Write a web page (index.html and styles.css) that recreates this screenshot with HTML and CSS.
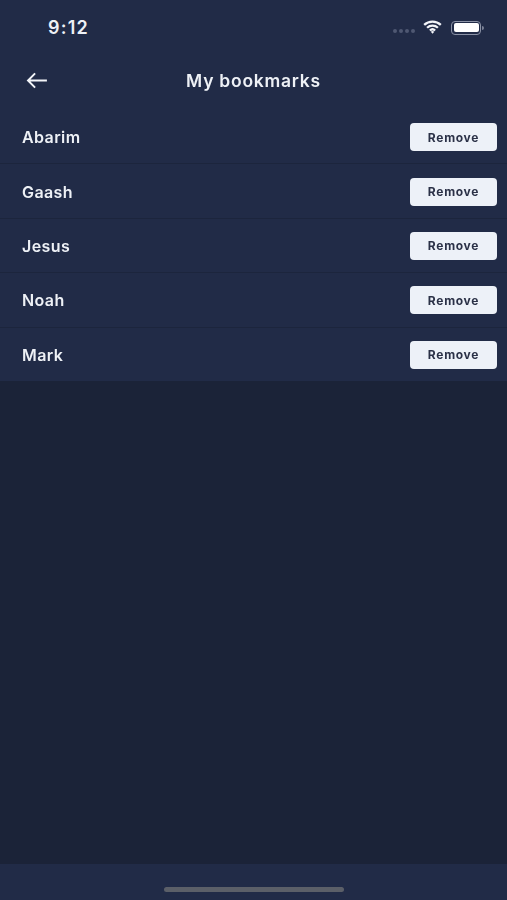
FILE: index.html
```html
<!DOCTYPE html>
<html lang="en">
<head>
<meta charset="utf-8">
<title>My bookmarks</title>
<link rel="stylesheet" href="styles.css">
</head>
<body>
<div class="app">
  <header class="top">
    <div class="status">
      <span class="time">9:12</span>
      <div class="status-icons">
        <span class="signal"><i></i><i></i><i></i><i></i></span>
        <svg class="wifi" width="21" height="14" viewBox="0 0 22 16"><path d="M1.5 5.6a13.6 13.6 0 0 1 19 0M4.8 8.9a9 9 0 0 1 12.4 0M8 12a4.4 4.4 0 0 1 6 0" fill="none" stroke="#f3f5f9" stroke-width="2.6"/><path d="M11 15.8l-2-2.4a3 3 0 0 1 4 0z" fill="#f3f5f9"/></svg>
        <span class="battery"><span class="level"></span></span>
        <span class="cap"></span>
      </div>
    </div>
    <nav class="nav">
      <svg class="back" width="24" height="17" viewBox="0 0 24 18"><path d="M22.5 9H2.5M10 1.5 2.5 9l7.5 7.5" fill="none" stroke="#f3f5f9" stroke-width="2.1"/></svg>
      <h1 class="title">My bookmarks</h1>
    </nav>
  </header>
  <ul class="list">
    <li class="row"><span class="name">Abarim</span><button class="remove">Remove</button></li>
    <li class="row"><span class="name">Gaash</span><button class="remove">Remove</button></li>
    <li class="row"><span class="name">Jesus</span><button class="remove">Remove</button></li>
    <li class="row"><span class="name">Noah</span><button class="remove">Remove</button></li>
    <li class="row"><span class="name">Mark</span><button class="remove">Remove</button></li>
  </ul>
  <div class="spacer"></div>
  <footer class="bottom"><span class="home"></span></footer>
</div>
</body>
</html>
```

FILE: styles.css
```css
* { box-sizing: border-box; margin: 0; padding: 0; }
html, body { height: 100%; }
body { background: #1b2338; font-family: Inter, "Liberation Sans", sans-serif; color: #eef1f6; overflow: hidden; }
.app { height: 900px; display: flex; flex-direction: column; filter: blur(0.35px); }
.top { background: #212b47; height: 110px; display: flex; flex-direction: column; }
.status { height: 55px; display: flex; justify-content: space-between; align-items: center; padding: 0 23px 0 48px; }
.time { font-size: 18px; font-weight: 600; letter-spacing: 1.2px; }
.status-icons { display: flex; align-items: center; }
.signal { display: flex; gap: 2px; margin: 6px 7px 0 0; }
.signal i { width: 4px; height: 4px; border-radius: 50%; background: #4f5872; }
.wifi { margin-bottom: 1px; }
.battery { width: 30px; height: 14px; margin-left: 8px; border: 1.5px solid #8b92a6; border-radius: 4px; padding: 1.5px; display: flex; }
.level { flex: 1; background: #fff; border-radius: 2px; }
.cap { width: 2px; height: 4px; margin-left: 1px; background: #7b8297; border-radius: 0 2px 2px 0; }
.nav { flex: 1; position: relative; display: flex; align-items: center; justify-content: center; }
.back { position: absolute; left: 25px; top: 17px; }
.title { font-size: 17.5px; font-weight: 600; letter-spacing: 0.75px; margin-bottom: 5px; }
.list { list-style: none; background: #212b47; }
.row { height: 54.4px; display: flex; justify-content: space-between; align-items: center; padding: 1px 10px 0 22px; border-bottom: 1px solid #1c253d; }
.row:last-child { height: 53.4px; border-bottom: 0; }
.name { font-size: 16px; font-weight: 600; letter-spacing: 0.4px; }
.remove { width: 87px; height: 28px; border: 0; border-radius: 4px; background: #edf1f8; color: #2b3147; font-family: inherit; font-size: 12px; font-weight: 700; letter-spacing: 0.7px; }
.spacer { flex: 1; }
.bottom { height: 36px; background: #212b47; display: flex; justify-content: center; align-items: flex-start; padding-top: 22.5px; }
.home { width: 180px; height: 5px; border-radius: 3px; background: #5b5f68; }
```
